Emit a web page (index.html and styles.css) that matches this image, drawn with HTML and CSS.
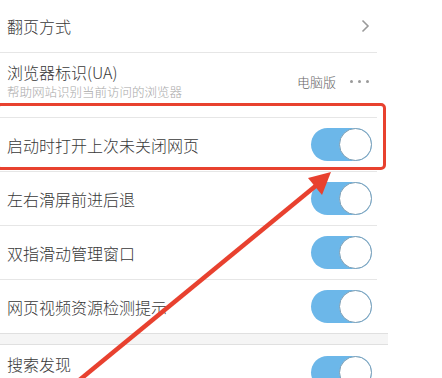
FILE: index.html
```html
<!DOCTYPE html>
<html lang="zh">
<head>
<meta charset="utf-8">
<link rel="stylesheet" href="styles.css">
</head>
<body>
<div class="page">
  <div class="list">
    <div class="row row-first">
      <span class="title">翻页方式</span>
      <svg class="chev" width="9" height="14" viewBox="0 0 9 14"><polyline points="1.5,1.5 7,7 1.5,12.5" fill="none" stroke="#9a9a9a" stroke-width="1.6"/></svg>
    </div>
    <div class="row row-tall">
      <div class="labels">
        <span class="title">浏览器标识(UA)</span>
        <span class="sub">帮助网站识别当前访问的浏览器</span>
      </div>
      <div class="value">
        <span class="val-text">电脑版</span>
        <span class="dots"><i></i><i></i><i></i></span>
      </div>
    </div>
    <div class="row">
      <span class="title">启动时打开上次未关闭网页</span>
      <span class="toggle"><span class="knob"></span></span>
    </div>
    <div class="row">
      <span class="title">左右滑屏前进后退</span>
      <span class="toggle"><span class="knob"></span></span>
    </div>
    <div class="row">
      <span class="title">双指滑动管理窗口</span>
      <span class="toggle"><span class="knob"></span></span>
    </div>
    <div class="row row-last">
      <span class="title">网页视频资源检测提示</span>
      <span class="toggle"><span class="knob"></span></span>
    </div>
    <div class="gap"></div>
    <div class="row row-search">
      <span class="title up">搜索发现</span>
      <span class="toggle"><span class="knob"></span></span>
    </div>
  </div>
  <div class="highlight"></div>
  <svg class="arrow" width="442" height="378" viewBox="0 0 442 378">
    <line x1="77" y1="382" x2="318" y2="184" stroke="#e8412f" stroke-width="4.5"/>
    <polygon points="331,172 308,178 322,195" fill="#e8412f"/>
  </svg>
</div>
</body>
</html>
```
FILE: styles.css
```css
* { box-sizing: border-box; }
html, body { margin: 0; padding: 0; background: #fff; }
body { width: 442px; height: 378px; overflow: hidden; font-family: "Noto Sans CJK SC", "Noto Sans", sans-serif; }
.page { position: relative; width: 442px; height: 378px; overflow: hidden; }
.list { width: 388px; }
.row {
  display: flex; align-items: center; justify-content: space-between;
  width: 377px; height: 54px; padding: 0 5px 0 7px;
  border-bottom: 1px solid #e6e6e6;
}
.row-first { height: 53px; padding-right: 7px; }
.row-tall { height: 65px; padding-bottom: 8px; }
.row-last { border-bottom: none; height: 53px; }
.row-search { border-bottom: none; }
.title { font-size: 16px; font-weight: 300; color: #383838; line-height: 20px; }
.title.up { position: relative; top: -8px; }
.labels { display: flex; flex-direction: column; gap: 2px; }
.sub { font-size: 12.5px; font-weight: 300; color: #a9a9a9; line-height: 16px; }
.value { display: flex; align-items: center; gap: 14px; padding-right: 3px; }
.val-text { font-size: 13px; font-weight: 300; color: #666; }
.dots { display: flex; gap: 5px; }
.dots i { display: block; width: 3px; height: 3px; border-radius: 50%; background: #9a9a9a; }
.toggle {
  position: relative; display: block; width: 61px; height: 33px;
  border-radius: 17px; background: #6cb7e9;
}
.knob {
  position: absolute; right: 0; top: 0; width: 33px; height: 33px;
  border-radius: 50%; background: #fff; border: 1.5px solid #7e9fb5;
}
.gap {
  width: 388px; height: 12px; background: #f5f5f5;
  border-top: 1px solid #e0e0e0; border-bottom: 1px solid #e0e0e0;
}
.highlight {
  position: absolute; left: -4px; top: 103px; width: 390px; height: 67px;
  border: 3.5px solid #e8412f; border-radius: 5px;
}
.arrow { position: absolute; left: 0; top: 0; }
```
